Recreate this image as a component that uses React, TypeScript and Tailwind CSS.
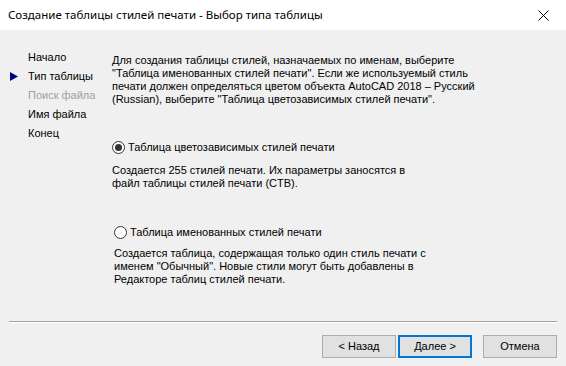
import React from "react";

const body = { fontFamily: '"Liberation Sans", Arial, sans-serif' };

function Radio({ checked }: { checked: boolean }) {
  return (
    <span className="flex h-[13px] w-[13px] shrink-0 items-center justify-center rounded-full border border-[#333333] bg-white">
      {checked && <span className="h-[7px] w-[7px] rounded-full bg-[#333333]" />}
    </span>
  );
}

export default function App() {
  return (
    <div className="flex h-[366px] w-[566px] flex-col overflow-hidden bg-[#f0f0f0] text-black" style={body}>
      <div className="flex h-[30px] shrink-0 items-center justify-between bg-white pl-[8px] pr-[16px]">
        <span className="text-[11.5px]" style={{ fontFamily: '"Noto Sans", "Open Sans", sans-serif' }}>
          Создание таблицы стилей печати - Выбор типа таблицы
        </span>
        <svg width="11" height="11" viewBox="0 0 11 11" className="mr-[1px]">
          <path d="M0.5 0.5 L10.5 10.5 M10.5 0.5 L0.5 10.5" stroke="#000" strokeWidth="1" />
        </svg>
      </div>

      <div className="flex h-[291px] shrink-0 text-[11px]">
        <div className="relative w-[112px] shrink-0 pl-[28px] pt-[18px] leading-[19px]">
          <svg width="8" height="9" viewBox="0 0 8 9" className="absolute left-[10px] top-[42px]">
            <path d="M0 0 L8 4.5 L0 9 Z" fill="#000080" />
          </svg>
          <div>Начало</div>
          <div>Тип таблицы</div>
          <div className="text-[#a0a0a0]">Поиск файла</div>
          <div>Имя файла</div>
          <div>Конец</div>
        </div>

        <div className="flex flex-col pt-[24px] leading-[13px]">
          <p className="whitespace-nowrap">
            Для создания таблицы стилей, назначаемых по именам, выберите
            <br />
            "Таблица именованных стилей печати". Если же используемый стиль
            <br />
            печати должен определяться цветом объекта AutoCAD 2018 – Русский
            <br />
            (Russian), выберите "Таблица цветозависимых стилей печати".
          </p>

          <div className="mt-[33px] flex h-[16px] items-center gap-[3px]">
            <Radio checked />
            <span>Таблица цветозависимых стилей печати</span>
          </div>
          <p className="mt-[9px] whitespace-nowrap">
            Создается 255 стилей печати. Их параметры заносятся в
            <br />
            файл таблицы стилей печати (CTB).
          </p>

          <div className="ml-[2px] mt-[34px] flex h-[16px] items-center gap-[3px]">
            <Radio checked={false} />
            <span>Таблица именованных стилей печати</span>
          </div>
          <p className="ml-[2px] mt-[7px] whitespace-nowrap">
            Создается таблица, содержащая только один стиль печати с
            <br />
            именем "Обычный". Новые стили могут быть добавлены в
            <br />
            Редакторе таблиц стилей печати.
          </p>
        </div>
      </div>

      <div className="mx-[9px] h-[2px] shrink-0 border-t border-b border-t-[#a0a0a0] border-b-white" />

      <div className="flex shrink-0 justify-end pr-[9px] pt-[12px] text-[11px]">
        <button className="h-[23px] w-[74px] border border-[#adadad] bg-[#e1e1e1]">&lt; Назад</button>
        <button className="ml-[2px] h-[23px] w-[74px] border-2 border-[#0078d7] bg-[#e1e1e1]">Далее &gt;</button>
        <button className="ml-[11px] h-[23px] w-[74px] border border-[#adadad] bg-[#e1e1e1]">Отмена</button>
      </div>
    </div>
  );
}
